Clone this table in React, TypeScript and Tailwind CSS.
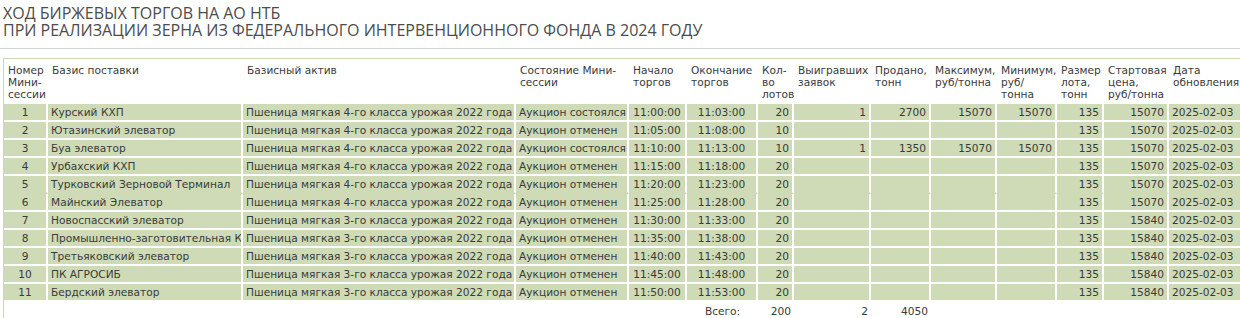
import React from "react";

type Row = {
  n: number;
  basis: string;
  asset: string;
  state: string;
  start: string;
  end: string;
  lots: string;
  won: string;
  sold: string;
  max: string;
  min: string;
  size: string;
  price: string;
  date: string;
  noBottom?: boolean;
};

const A4 = "Пшеница мягкая 4-го класса урожая 2022 года";
const A3 = "Пшеница мягкая 3-го класса урожая 2022 года";
const OK = "Аукцион состоялся";
const NO = "Аукцион отменен";

const rows: Row[] = [
  { n: 1, basis: "Курский КХП", asset: A4, state: OK, start: "11:00:00", end: "11:03:00", lots: "20", won: "1", sold: "2700", max: "15070", min: "15070", size: "135", price: "15070", date: "2025-02-03" },
  { n: 2, basis: "Ютазинский элеватор", asset: A4, state: NO, start: "11:05:00", end: "11:08:00", lots: "10", won: "", sold: "", max: "", min: "", size: "135", price: "15070", date: "2025-02-03" },
  { n: 3, basis: "Буа элеватор", asset: A4, state: OK, start: "11:10:00", end: "11:13:00", lots: "10", won: "1", sold: "1350", max: "15070", min: "15070", size: "135", price: "15070", date: "2025-02-03" },
  { n: 4, basis: "Урбахский КХП", asset: A4, state: NO, start: "11:15:00", end: "11:18:00", lots: "20", won: "", sold: "", max: "", min: "", size: "135", price: "15070", date: "2025-02-03" },
  { n: 5, basis: "Турковский Зерновой Терминал", asset: A4, state: NO, start: "11:20:00", end: "11:23:00", lots: "20", won: "", sold: "", max: "", min: "", size: "135", price: "15070", date: "2025-02-03", noBottom: true },
  { n: 6, basis: "Майнский Элеватор", asset: A4, state: NO, start: "11:25:00", end: "11:28:00", lots: "20", won: "", sold: "", max: "", min: "", size: "135", price: "15070", date: "2025-02-03" },
  { n: 7, basis: "Новоспасский элеватор", asset: A3, state: NO, start: "11:30:00", end: "11:33:00", lots: "20", won: "", sold: "", max: "", min: "", size: "135", price: "15840", date: "2025-02-03" },
  { n: 8, basis: "Промышленно-заготовительная К", asset: A3, state: NO, start: "11:35:00", end: "11:38:00", lots: "20", won: "", sold: "", max: "", min: "", size: "135", price: "15840", date: "2025-02-03" },
  { n: 9, basis: "Третьяковский элеватор", asset: A3, state: NO, start: "11:40:00", end: "11:43:00", lots: "20", won: "", sold: "", max: "", min: "", size: "135", price: "15840", date: "2025-02-03" },
  { n: 10, basis: "ПК АГРОСИБ", asset: A3, state: NO, start: "11:45:00", end: "11:48:00", lots: "20", won: "", sold: "", max: "", min: "", size: "135", price: "15840", date: "2025-02-03" },
  { n: 11, basis: "Бердский элеватор", asset: A3, state: NO, start: "11:50:00", end: "11:53:00", lots: "20", won: "", sold: "", max: "", min: "", size: "135", price: "15840", date: "2025-02-03" },
];

const widths = [44, 195, 273, 113, 58, 71, 36, 77, 60, 66, 60, 47, 65, 78];

const headers: React.ReactNode[] = [
  <>Номер<br />Мини-<br />сессии</>,
  <>Базис поставки</>,
  <>Базисный актив</>,
  <>Состояние Мини-<br />сессии</>,
  <>Начало<br />торгов</>,
  <>Окончание<br />торгов</>,
  <>Кол-<br />во<br />лотов</>,
  <>Выигравших<br />заявок</>,
  <>Продано,<br />тонн</>,
  <>Максимум,<br />руб/тонна</>,
  <>Минимум,<br />руб/<br />тонна</>,
  <>Размер<br />лота,<br />тонн</>,
  <>Стартовая<br />цена,<br />руб/тонна</>,
  <>Дата<br />обновления</>,
];

export default function App() {
  return (
    <div className="w-[1240px] h-[318px] overflow-hidden bg-white text-[#3a3a3a]">
      <div className="px-[3px] pt-[5px] pb-[9px] text-[16px] leading-[17px] text-[#4c4c4c] font-['Open_Sans',sans-serif] border-b border-[#cfd3d6]">
        <div>ХОД БИРЖЕВЫХ ТОРГОВ НА АО НТБ</div>
        <div>ПРИ РЕАЛИЗАЦИИ ЗЕРНА ИЗ ФЕДЕРАЛЬНОГО ИНТЕРВЕНЦИОННОГО ФОНДА В 2024 ГОДУ</div>
      </div>
      <div className="mt-[9px] ml-[3px] w-[1260px] border border-[#cbd9b0] pb-[40px] font-['DejaVu_Sans',Verdana,sans-serif] text-[10.6px]">
        <table className="w-[1243px] table-fixed border-separate border-spacing-0">
          <colgroup>
            {widths.map((w, i) => (
              <col key={i} style={{ width: w }} />
            ))}
          </colgroup>
          <thead>
            <tr>
              {headers.map((h, i) => (
                <th
                  key={i}
                  className="text-left font-normal align-top leading-[12px] pt-[5px] pb-[4px] pl-[4px] pr-0 whitespace-nowrap overflow-visible"
                >
                  {h}
                </th>
              ))}
            </tr>
          </thead>
          <tbody>
            {rows.map((r) => {
              const b = r.noBottom ? "border-b-[#cedbb6]" : "border-b-white";
              const cell = `bg-[#cedbb6] h-[18px] p-0 leading-[16px] border-r-2 border-b-2 border-r-white ${b} whitespace-nowrap overflow-hidden`;
              return (
                <tr key={r.n}>
                  <td className={`${cell} text-center`}>{r.n}</td>
                  <td className={`${cell} pl-[3px]`}>{r.basis}</td>
                  <td className={`${cell} pl-[3px]`}>{r.asset}</td>
                  <td className={`${cell} pl-[3px]`}>{r.state}</td>
                  <td className={`${cell} text-center`}>{r.start}</td>
                  <td className={`${cell} text-center`}>{r.end}</td>
                  <td className={`${cell} text-right pr-[3px]`}>{r.lots}</td>
                  <td className={`${cell} text-right pr-[3px]`}>{r.won}</td>
                  <td className={`${cell} text-right pr-[3px]`}>{r.sold}</td>
                  <td className={`${cell} text-right pr-[3px]`}>{r.max}</td>
                  <td className={`${cell} text-right pr-[3px]`}>{r.min}</td>
                  <td className={`${cell} text-right pr-[3px]`}>{r.size}</td>
                  <td className={`${cell} text-right pr-[3px]`}>{r.price}</td>
                  <td className={`${cell} pl-[3px]`}>{r.date}</td>
                </tr>
              );
            })}
          </tbody>
          <tfoot>
            <tr className="leading-[16px]">
              <td colSpan={5} />
              <td className="text-center pt-[1px]">Всего:</td>
              <td className="text-right pr-[3px] pt-[1px]">200</td>
              <td className="text-right pr-[3px] pt-[1px]">2</td>
              <td className="text-right pr-[3px] pt-[1px]">4050</td>
              <td colSpan={5} />
            </tr>
          </tfoot>
        </table>
      </div>
    </div>
  );
}
